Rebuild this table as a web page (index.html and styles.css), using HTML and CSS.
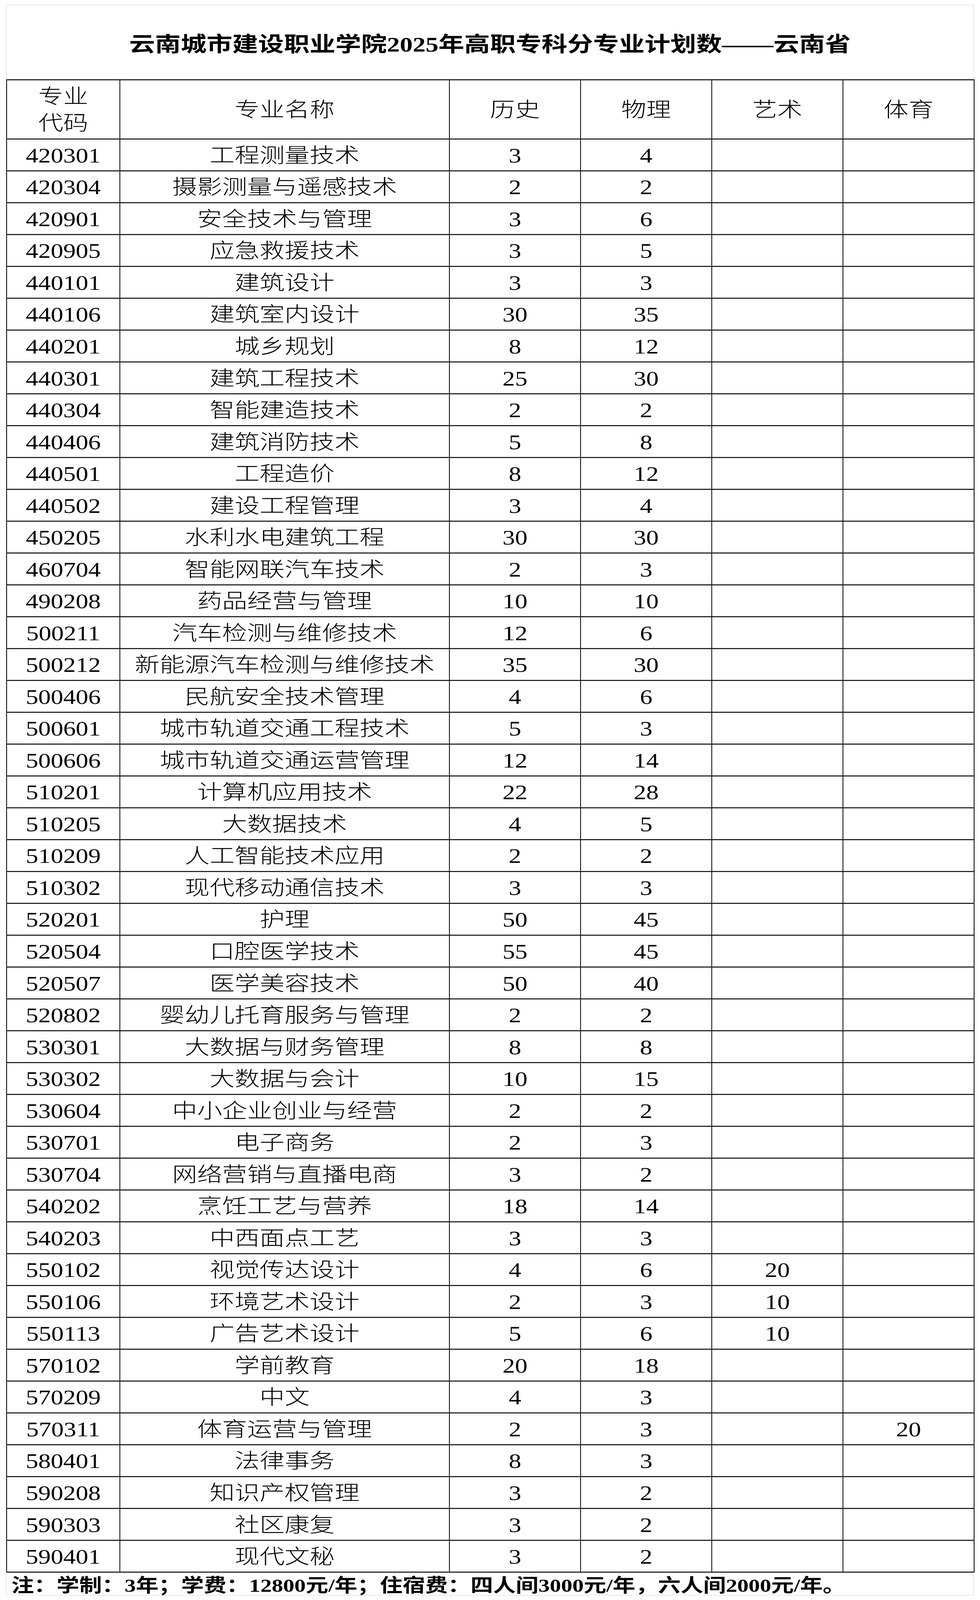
FILE: index.html
```html
<!DOCTYPE html>
<html lang="zh-CN">
<head>
<meta charset="utf-8">
<title>云南城市建设职业学院2025年高职专科分专业计划数——云南省</title>
<link rel="stylesheet" href="styles.css">
</head>
<body>
<div class="frame">
<div class="page">
<div class="sheet">
  <div class="title">云南城市建设职业学院2025年高职专科分专业计划数——云南省</div>
  <table class="plan">
    <colgroup>
      <col class="c-code"><col class="c-name"><col class="c-num"><col class="c-num"><col class="c-num"><col class="c-num">
    </colgroup>
    <thead>
      <tr class="head">
        <th class="code-head">专业<br>代码</th>
        <th>专业名称</th>
        <th>历史</th>
        <th>物理</th>
        <th>艺术</th>
        <th>体育</th>
      </tr>
    </thead>
    <tbody>
      <tr><td>420301</td><td>工程测量技术</td><td>3</td><td>4</td><td></td><td></td></tr>
      <tr><td>420304</td><td>摄影测量与遥感技术</td><td>2</td><td>2</td><td></td><td></td></tr>
      <tr><td>420901</td><td>安全技术与管理</td><td>3</td><td>6</td><td></td><td></td></tr>
      <tr><td>420905</td><td>应急救援技术</td><td>3</td><td>5</td><td></td><td></td></tr>
      <tr><td>440101</td><td>建筑设计</td><td>3</td><td>3</td><td></td><td></td></tr>
      <tr><td>440106</td><td>建筑室内设计</td><td>30</td><td>35</td><td></td><td></td></tr>
      <tr><td>440201</td><td>城乡规划</td><td>8</td><td>12</td><td></td><td></td></tr>
      <tr><td>440301</td><td>建筑工程技术</td><td>25</td><td>30</td><td></td><td></td></tr>
      <tr><td>440304</td><td>智能建造技术</td><td>2</td><td>2</td><td></td><td></td></tr>
      <tr><td>440406</td><td>建筑消防技术</td><td>5</td><td>8</td><td></td><td></td></tr>
      <tr><td>440501</td><td>工程造价</td><td>8</td><td>12</td><td></td><td></td></tr>
      <tr><td>440502</td><td>建设工程管理</td><td>3</td><td>4</td><td></td><td></td></tr>
      <tr><td>450205</td><td>水利水电建筑工程</td><td>30</td><td>30</td><td></td><td></td></tr>
      <tr><td>460704</td><td>智能网联汽车技术</td><td>2</td><td>3</td><td></td><td></td></tr>
      <tr><td>490208</td><td>药品经营与管理</td><td>10</td><td>10</td><td></td><td></td></tr>
      <tr><td>500211</td><td>汽车检测与维修技术</td><td>12</td><td>6</td><td></td><td></td></tr>
      <tr><td>500212</td><td>新能源汽车检测与维修技术</td><td>35</td><td>30</td><td></td><td></td></tr>
      <tr><td>500406</td><td>民航安全技术管理</td><td>4</td><td>6</td><td></td><td></td></tr>
      <tr><td>500601</td><td>城市轨道交通工程技术</td><td>5</td><td>3</td><td></td><td></td></tr>
      <tr><td>500606</td><td>城市轨道交通运营管理</td><td>12</td><td>14</td><td></td><td></td></tr>
      <tr><td>510201</td><td>计算机应用技术</td><td>22</td><td>28</td><td></td><td></td></tr>
      <tr><td>510205</td><td>大数据技术</td><td>4</td><td>5</td><td></td><td></td></tr>
      <tr><td>510209</td><td>人工智能技术应用</td><td>2</td><td>2</td><td></td><td></td></tr>
      <tr><td>510302</td><td>现代移动通信技术</td><td>3</td><td>3</td><td></td><td></td></tr>
      <tr><td>520201</td><td>护理</td><td>50</td><td>45</td><td></td><td></td></tr>
      <tr><td>520504</td><td>口腔医学技术</td><td>55</td><td>45</td><td></td><td></td></tr>
      <tr><td>520507</td><td>医学美容技术</td><td>50</td><td>40</td><td></td><td></td></tr>
      <tr><td>520802</td><td>婴幼儿托育服务与管理</td><td>2</td><td>2</td><td></td><td></td></tr>
      <tr><td>530301</td><td>大数据与财务管理</td><td>8</td><td>8</td><td></td><td></td></tr>
      <tr><td>530302</td><td>大数据与会计</td><td>10</td><td>15</td><td></td><td></td></tr>
      <tr><td>530604</td><td>中小企业创业与经营</td><td>2</td><td>2</td><td></td><td></td></tr>
      <tr><td>530701</td><td>电子商务</td><td>2</td><td>3</td><td></td><td></td></tr>
      <tr><td>530704</td><td>网络营销与直播电商</td><td>3</td><td>2</td><td></td><td></td></tr>
      <tr><td>540202</td><td>烹饪工艺与营养</td><td>18</td><td>14</td><td></td><td></td></tr>
      <tr><td>540203</td><td>中西面点工艺</td><td>3</td><td>3</td><td></td><td></td></tr>
      <tr><td>550102</td><td>视觉传达设计</td><td>4</td><td>6</td><td>20</td><td></td></tr>
      <tr><td>550106</td><td>环境艺术设计</td><td>2</td><td>3</td><td>10</td><td></td></tr>
      <tr><td>550113</td><td>广告艺术设计</td><td>5</td><td>6</td><td>10</td><td></td></tr>
      <tr><td>570102</td><td>学前教育</td><td>20</td><td>18</td><td></td><td></td></tr>
      <tr><td>570209</td><td>中文</td><td>4</td><td>3</td><td></td><td></td></tr>
      <tr><td>570311</td><td>体育运营与管理</td><td>2</td><td>3</td><td></td><td>20</td></tr>
      <tr><td>580401</td><td>法律事务</td><td>8</td><td>3</td><td></td><td></td></tr>
      <tr><td>590208</td><td>知识产权管理</td><td>3</td><td>2</td><td></td><td></td></tr>
      <tr><td>590303</td><td>社区康复</td><td>3</td><td>2</td><td></td><td></td></tr>
      <tr><td>590401</td><td>现代文秘</td><td>3</td><td>2</td><td></td><td></td></tr>
    </tbody>
  </table>
  <div class="note">注：学制：3年；学费：12800元/年；住宿费：四人间3000元/年，六人间2000元/年。</div>
</div>
</div>
</div>
</body>
</html>
```

FILE: styles.css
```css
html, body {
  margin: 0;
  padding: 0;
  background: #ffffff;
}

body {
  font-family: "Liberation Serif", "Noto Sans CJK SC", serif;
  color: #000000;
}

/* The viewport is shorter than the reference; keep the page inside it. */
.frame {
  height: 100vh;
  overflow: hidden;
}

/* The sheet is laid out at the reference's 2510x5024 geometry and
   fitted to the 4096px-tall viewport vertically. */
.page {
  padding: 15px 0 0 15px;
  transform: scaleY(0.81529);
  transform-origin: 0 0;
}

.sheet {
  box-sizing: border-box;
  width: 2480px;
  border: 2px solid #e5e5e5;
  background: #ffffff;
}

.title {
  height: 232px;
  display: flex;
  align-items: center;
  justify-content: center;
  font-size: 66px;
  font-weight: 700;
  box-sizing: border-box;
}

.plan {
  border-collapse: collapse;
  table-layout: fixed;
  width: 2478px;
  margin-left: -1px;
}

.c-code { width: 290px; }
.c-name { width: 844px; }
.c-num { width: 336px; }

.plan th,
.plan td {
  border-left: 2px solid #000;
  border-right: 2px solid #000;
  border-top: 3px solid #000;
  border-bottom: 3px solid #000;
  padding: 4px 0 0 0;
  text-align: center;
  vertical-align: middle;
  font-size: 64px;
  font-weight: 300;
  line-height: 1;
  white-space: nowrap;
}

.plan tbody tr {
  height: 100px;
}

.plan tr.head {
  height: 186px;
}

.plan th.code-head {
  line-height: 84px;
}

.note {
  height: 70px;
  display: flex;
  align-items: center;
  padding-left: 12px;
  font-size: 58px;
  font-weight: 700;
  white-space: nowrap;
}
```
